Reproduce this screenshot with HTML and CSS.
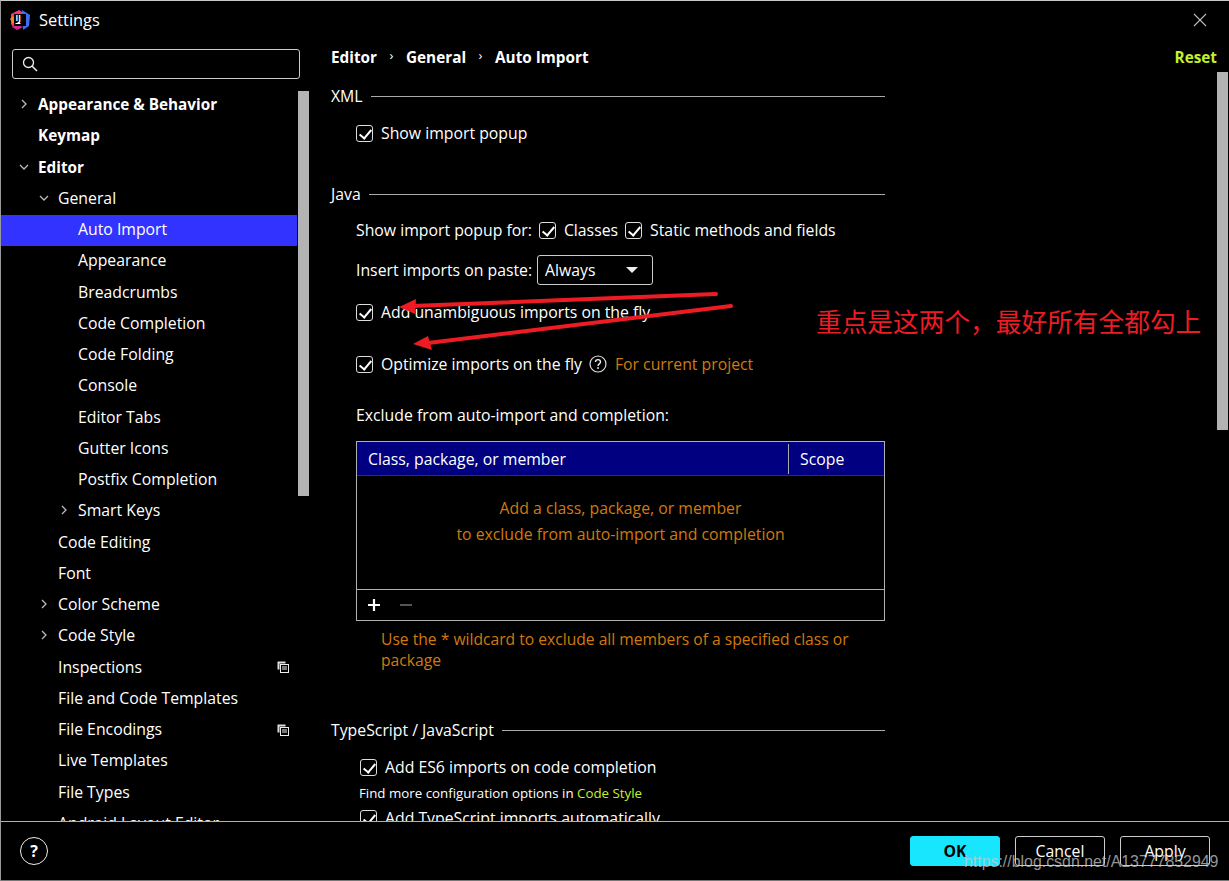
FILE: index.html
```html
<!DOCTYPE html>
<html lang="en">
<head>
  <meta charset="UTF-8">
  <title>Settings</title>
  <link rel="stylesheet" href="styles.css">
</head>
<body>
<div class="window">

  <header class="titlebar">
    <svg class="logo" width="20" height="20" viewBox="0 0 20 20">
      <path d="M1 4 9 0l5 3-6 5-5 9-2-3z" fill="#ff2f7e"/>
      <path d="M0 9l3-3 3 5-3 3z" fill="#fc801d"/>
      <path d="M2 17l5 3 6-3-7-3z" fill="#dd1f8f"/>
      <path d="M12 0l8 5-1 11-6 4z" fill="#3a6ff0"/>
      <rect x="4" y="4" width="12" height="12" fill="#000"/>
      <rect x="5.500" y="13" width="5" height="1" fill="#fff"/>
      <text class="logo-text" x="5.500" y="11">IJ</text>
    </svg>
    <span class="title">Settings</span>
    <svg class="close" width="14" height="14" viewBox="0 0 14 14">
      <path d="M1 1l12 12M13 1 1 13" stroke="#bbb" stroke-width="1.100" fill="none"/>
    </svg>
  </header>

  <div class="body">
    <aside class="sidebar">
      <div class="search">
        <svg width="16" height="16" viewBox="0 0 16 16">
          <circle cx="6.500" cy="6.500" r="5" stroke="#eee" stroke-width="1.300" fill="none"/>
          <path d="M10 10l5 5" stroke="#eee" stroke-width="1.500"/>
        </svg>
      </div>
      <ul class="tree">
        <li class="item bold d0"><svg class="arrow" viewBox="0 0 10 10"><path d="M3 1l4 4-4 4"/></svg>Appearance &amp; Behavior</li>
        <li class="item bold d0">Keymap</li>
        <li class="item bold d0"><svg class="arrow" viewBox="0 0 10 10"><path d="M1 3l4 4 4-4"/></svg>Editor</li>
        <li class="item d1"><svg class="arrow" viewBox="0 0 10 10"><path d="M1 3l4 4 4-4"/></svg>General</li>
        <li class="item d2 selected">Auto Import</li>
        <li class="item d2">Appearance</li>
        <li class="item d2">Breadcrumbs</li>
        <li class="item d2">Code Completion</li>
        <li class="item d2">Code Folding</li>
        <li class="item d2">Console</li>
        <li class="item d2">Editor Tabs</li>
        <li class="item d2">Gutter Icons</li>
        <li class="item d2">Postfix Completion</li>
        <li class="item d2"><svg class="arrow" viewBox="0 0 10 10"><path d="M3 1l4 4-4 4"/></svg>Smart Keys</li>
        <li class="item d1">Code Editing</li>
        <li class="item d1">Font</li>
        <li class="item d1"><svg class="arrow" viewBox="0 0 10 10"><path d="M3 1l4 4-4 4"/></svg>Color Scheme</li>
        <li class="item d1"><svg class="arrow" viewBox="0 0 10 10"><path d="M3 1l4 4-4 4"/></svg>Code Style</li>
        <li class="item d1">Inspections
          <svg class="copy" width="12" height="12" viewBox="0 0 12 12"><path d="M.5.500h8v2h-6v6h-2z" fill="#ddd"/><rect x="3.500" y="3.500" width="8" height="8" fill="#000" stroke="#eee"/><path d="M5 6h5M5 8h5" stroke="#eee"/></svg>
        </li>
        <li class="item d1">File and Code Templates</li>
        <li class="item d1">File Encodings
          <svg class="copy" width="12" height="12" viewBox="0 0 12 12"><path d="M.5.500h8v2h-6v6h-2z" fill="#ddd"/><rect x="3.500" y="3.500" width="8" height="8" fill="#000" stroke="#eee"/><path d="M5 6h5M5 8h5" stroke="#eee"/></svg>
        </li>
        <li class="item d1">Live Templates</li>
        <li class="item d1">File Types</li>
        <li class="item d1">Android Layout Editor</li>
      </ul>
      <div class="tree-edge"></div>
      <div class="thumb tree-thumb"></div>
    </aside>

    <main class="content">
      <div class="crumbs">
        <span>Editor</span><i class="sep">›</i><span>General</span><i class="sep">›</i><span>Auto Import</span>
        <a class="reset">Reset</a>
      </div>

      <div class="form">
        <div class="legend">XML</div>
        <label class="row xml-row"><span class="check"></span>Show import popup</label>

        <div class="legend java">Java</div>
        <div class="row popup-row">Show import popup for:
          <span class="check"></span>Classes
          <span class="check"></span>Static methods and fields
        </div>
        <div class="row paste-row">Insert imports on paste:
          <span class="select">Always<b class="caret"></b></span>
        </div>
        <label class="row fly-row"><span class="check"></span>Add unambiguous imports on the fly</label>
        <div class="row optimize-row">
          <span class="check"></span>Optimize imports on the fly
          <svg class="hint-icon" width="18" height="18" viewBox="0 0 18 18">
            <circle cx="9" cy="9" r="8" stroke="#ddd" stroke-width="1.200" fill="none"/>
            <path d="M6.500 7c0-3.200 5-3.200 5 0 0 2-2.500 1.800-2.500 4" stroke="#eee" stroke-width="1.400" fill="none"/>
            <rect x="8.200" y="12.200" width="1.600" height="1.700" fill="#eee"/>
          </svg>
          <span class="orange">For current project</span>
        </div>
        <div class="row exclude-row">Exclude from auto-import and completion:</div>

        <div class="table">
          <div class="thead">
            <div class="col-name">Class, package, or member</div>
            <div class="col-scope">Scope</div>
          </div>
          <div class="tbody orange">
            <p>Add a class, package, or member</p>
            <p>to exclude from auto-import and completion</p>
          </div>
          <div class="tools">
            <svg width="14" height="14" viewBox="0 0 14 14"><path d="M7 1v12M1 7h12" stroke="#fff" stroke-width="2.200"/></svg>
            <svg width="14" height="14" viewBox="0 0 14 14"><path d="M1 7h12" stroke="#555" stroke-width="2"/></svg>
          </div>
        </div>
        <p class="hint orange">Use the * wildcard to exclude all members of a specified class or<br>package</p>

        <div class="legend ts">TypeScript / JavaScript</div>
        <label class="row es6-row"><span class="check"></span>Add ES6 imports on code completion</label>
        <div class="more">Find more configuration options in <a class="link">Code Style</a></div>
        <label class="row auto-row"><span class="check"></span>Add TypeScript imports automatically</label>
      </div>
      <div class="thumb form-thumb"></div>
    </main>
  </div>

  <footer class="footer">
    <span class="help">?</span>
    <div class="buttons">
      <button class="btn primary">OK</button>
      <button class="btn">Cancel</button>
      <button class="btn">Apply</button>
    </div>
  </footer>

  <!-- annotations drawn on top of the screenshot -->
  <svg class="arrows" width="1229" height="881" viewBox="0 0 1229 881">
    <path d="M716 294 412 306" stroke="#ed1c24" stroke-width="4" stroke-linecap="round"/>
    <path d="M399 307 416 299 415 314z" fill="#ed1c24"/>
    <path d="M731 306 428 343" stroke="#ed1c24" stroke-width="4" stroke-linecap="round"/>
    <path d="M413 344 428 336 432 350z" fill="#ed1c24"/>
  </svg>
  <div class="note">重点是这两个，最好所有全都勾上</div>
  <div class="watermark">https://blog.csdn.net/A13777852949</div>
</div>
</body>
</html>
```

FILE: styles.css
```css
* {
  box-sizing: border-box;
}

html, body {
  margin: 0;
  height: 100%;
  background: #000;
}

body {
  font-family: "Open Sans", "Noto Sans", sans-serif;
  font-size: 15.800px;
  color: #fff;
}

.window {
  position: relative;
  width: 1229px;
  height: 881px;
  display: flex;
  flex-direction: column;
  overflow: hidden;
  background: #000;
  border-top: 1px solid #c8c8c8;
  border-left: 1px solid #999;
  border-bottom: 1px solid #777;
}

/* title bar */
.titlebar {
  height: 37px;
  flex: none;
  display: flex;
  align-items: center;
  padding: 0 22px 0 9px;
}

.logo-text {
  font-size: 8px;
  font-weight: 700;
  fill: #fff;
}

.title {
  margin-left: 9px;
  font-size: 16.400px;
}

.close {
  margin-left: auto;
}

.body {
  flex: 1;
  min-height: 0;
  display: flex;
}

/* sidebar */
.sidebar {
  position: relative;
  width: 308px;
  flex: none;
  overflow: hidden;
}

.search {
  height: 30px;
  width: 288px;
  margin: 11px 0 0 11px;
  border: 1px solid #ccc;
  border-radius: 3px;
  display: flex;
  align-items: center;
  padding-left: 9px;
}

.tree {
  list-style: none;
  margin: 10.500px 0 0;
  padding: 0;
}

.item {
  position: relative;
  height: 31.250px;
  width: 296px;
  display: flex;
  align-items: center;
  padding-bottom: 2px;
  white-space: nowrap;
}

.bold {
  font-weight: 700;
  font-size: 15.300px;
}

.d0 { padding-left: 37px; }
.d1 { padding-left: 57px; }
.d2 { padding-left: 77px; }

.selected {
  background: #3333ff;
}

.arrow {
  width: 10px;
  height: 10px;
  margin-left: -19px;
  margin-right: 9px;
  flex: none;
  fill: none;
  stroke: #bbb;
  stroke-width: 1.300;
}

.copy {
  position: absolute;
  left: 276px;
  top: 9px;
}

.tree-edge {
  position: absolute;
  left: 307px;
  top: 177px;
  width: 1px;
  height: 31px;
  background: #3333ff;
}

.thumb {
  position: absolute;
  width: 11px;
  background: #b3b3b3;
}

.tree-thumb {
  left: 297px;
  top: 53px;
  height: 405px;
}

/* right side */
.content {
  position: relative;
  flex: 1;
  min-width: 0;
  overflow: hidden;
  padding-left: 22px;
}

.crumbs {
  height: 38px;
  display: flex;
  align-items: center;
  font-weight: 700;
  font-size: 15.300px;
}

.sep {
  width: 29px;
  text-align: center;
  font-style: normal;
  font-weight: 400;
  font-size: 13px;
  margin-top: -4px;
}

.reset {
  margin-left: auto;
  margin-right: 12px;
  color: #c6f02a;
}

.form {
  width: 554px;
  padding-top: 10px;
}

.form-thumb {
  right: 1px;
  top: 34px;
  height: 358px;
}

.legend {
  height: 20px;
  display: flex;
  align-items: center;
}

.legend::after {
  content: "";
  flex: 1;
  height: 1px;
  margin: 1px 0 0 8px;
  background: #aaa;
}

.legend.java { margin-top: 39px; }
.legend.ts { margin-top: 49px; }

.row {
  height: 24px;
  display: flex;
  align-items: center;
  margin-left: 25px;
  white-space: nowrap;
}

.xml-row { margin-top: 15px; }
.popup-row { margin-top: 14px; }
.paste-row { margin-top: 13px; height: 30px; }
.fly-row { margin-top: 15px; }
.optimize-row { margin-top: 28px; }
.exclude-row { margin-top: 27px; }
.es6-row { margin: 15px 0 0 29px; }
.auto-row { margin: 3px 0 0 29px; }

.check {
  width: 17px;
  height: 17px;
  flex: none;
  margin-right: 8px;
  border: 1px solid #ddd;
  border-radius: 3px;
  position: relative;
}

.check::after {
  content: "";
  position: absolute;
  left: 5px;
  top: 1.500px;
  width: 5px;
  height: 10px;
  border: solid #fff;
  border-width: 0 2px 2px 0;
  transform: rotate(40deg);
}

.popup-row .check {
  margin-left: 7px;
}

.select {
  width: 116px;
  height: 30px;
  margin-left: 5px;
  padding: 0 14px 0 7px;
  border: 1px solid #ccc;
  border-radius: 3px;
  display: flex;
  align-items: center;
  justify-content: space-between;
}

.caret {
  width: 0;
  height: 0;
  border-style: solid;
  border-width: 6px 6px 0;
  border-color: #eee transparent transparent;
}

.hint-icon {
  margin: 0 8px 0 7px;
  flex: none;
}

.orange {
  color: #d07a0e;
}

.table {
  margin: 14px 0 0 25px;
  height: 180px;
  border: 1px solid #b0b0b0;
  display: flex;
  flex-direction: column;
}

.thead {
  height: 34px;
  flex: none;
  background: #000080;
  display: flex;
  align-items: center;
  border-bottom: 1px solid #333;
}

.col-name {
  width: 432px;
  height: 30px;
  padding-left: 11px;
  display: flex;
  align-items: center;
  border-right: 1px solid #aaa;
}

.col-scope {
  padding-left: 11px;
}

.tbody {
  flex: 1;
  padding-top: 19px;
  text-align: center;
  border-bottom: 1px solid #b0b0b0;
}

.tbody p {
  margin: 0;
  height: 26px;
  line-height: 26px;
}

.tools {
  height: 30px;
  flex: none;
  display: flex;
  align-items: center;
  gap: 18px;
  padding-left: 10px;
}

.hint {
  margin: 8px 0 0 50px;
  font-size: 15.650px;
  line-height: 21px;
  white-space: nowrap;
}

.more {
  margin: 4px 0 0 28px;
  height: 20px;
  line-height: 20px;
  font-size: 13.300px;
  white-space: nowrap;
}

.link {
  color: #c6f02a;
}

/* footer */
.footer {
  height: 59px;
  flex: none;
  position: relative;
  border-top: 1px solid #b0b0b0;
  display: flex;
  align-items: center;
  justify-content: space-between;
  padding: 0 19px 0 19px;
  background: #000;
}

.help {
  width: 28px;
  height: 28px;
  border: 1.500px solid #eee;
  border-radius: 50%;
  display: flex;
  align-items: center;
  justify-content: center;
  font-weight: 700;
  font-size: 16px;
}

.buttons {
  display: flex;
  gap: 15px;
}

.btn {
  width: 90px;
  height: 30px;
  padding: 0;
  font: inherit;
  color: #fff;
  background: #000;
  border: 1px solid #ccc;
  border-radius: 3px;
}

.primary {
  background: #18e6ff;
  border-color: #18e6ff;
  color: #000;
  font-weight: 700;
}

/* annotations */
.arrows {
  position: absolute;
  left: -1px;
  top: -1px;
  pointer-events: none;
}

.note {
  position: absolute;
  left: 815px;
  top: 303px;
  font-family: "Noto Sans CJK SC", sans-serif;
  font-size: 25.700px;
  line-height: 34px;
  color: #ed1c24;
  white-space: nowrap;
}

.watermark {
  position: absolute;
  left: 963px;
  top: 852px;
  font-family: "Liberation Sans", sans-serif;
  font-size: 15.900px;
  color: rgba(200, 200, 200, 0.75);
  white-space: nowrap;
}
```
